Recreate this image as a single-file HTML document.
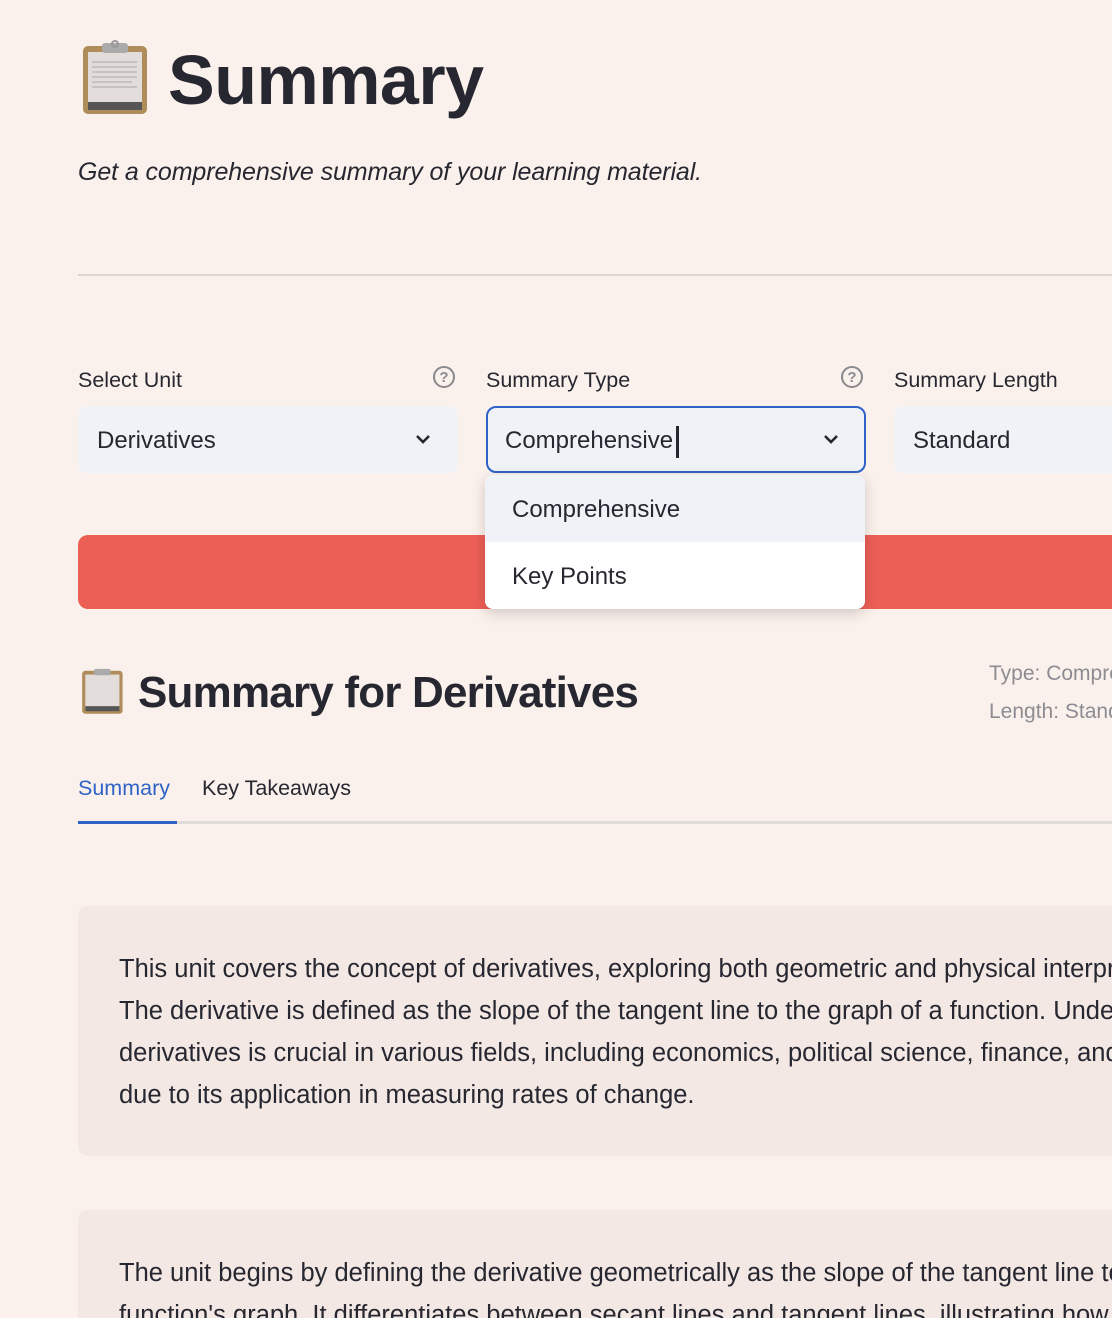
<!DOCTYPE html>
<html><head><meta charset="utf-8"><style>
html,body{margin:0;padding:0;width:1112px;height:1318px;overflow:hidden}
body{background:#fbf1ec;font-family:"Liberation Sans",sans-serif;color:#262730;position:relative}
.a{position:absolute;white-space:nowrap}
.sel{position:absolute;top:406px;height:67px;background:#eff2f6;border-radius:10px;box-sizing:border-box;font-size:24px;line-height:69px;padding-left:19px}
.chev{position:absolute;top:26px}
.help{position:absolute;top:366px;width:22px;height:22px;border:2px solid #8a8a8f;border-radius:50%;box-sizing:border-box;color:#8a8a8f;font-size:15px;line-height:19px;text-align:center;font-weight:bold}
.lbl{position:absolute;top:368px;font-size:21.5px}
.card{position:absolute;left:78px;width:1100px;background:#f3e8e4;border-radius:10px;overflow:hidden}
.p{font-size:25.5px;line-height:42px;letter-spacing:0px}
</style></head><body>
<svg class="a" style="left:82px;top:40px" width="68" height="76" viewBox="0 0 68 76">
<rect x="1" y="6" width="64" height="68" rx="5" fill="#b08c5a"/>
<rect x="6" y="12" width="54" height="56" fill="#e2dcda"/>
<rect x="6" y="62" width="54" height="8" fill="#555"/>
<rect x="20" y="3" width="26" height="10" rx="3" fill="#aaa"/>
<circle cx="33" cy="4" r="3" fill="none" stroke="#999" stroke-width="2"/>
<g stroke="#aaa" stroke-width="1"><line x1="10" y1="22" x2="55" y2="22"/><line x1="10" y1="27" x2="55" y2="27"/><line x1="10" y1="32" x2="55" y2="32"/><line x1="10" y1="37" x2="55" y2="37"/><line x1="10" y1="42" x2="50" y2="42"/><line x1="10" y1="47" x2="55" y2="47"/></g>
</svg>
<div class="a" style="left:168px;top:40px;font-size:70px;font-weight:bold;letter-spacing:-0.5px">Summary</div>
<div class="a" style="left:78px;top:158px;font-size:25px;font-style:italic;letter-spacing:-0.1px">Get a comprehensive summary of your learning material.</div>
<div class="a" style="left:78px;top:274px;width:1034px;height:2px;background:#dcd6d3"></div>

<div class="lbl" style="left:78px">Select Unit</div>
<div class="help" style="left:433px">?</div>
<div class="lbl" style="left:486px">Summary Type</div>
<div class="help" style="left:841px">?</div>
<div class="lbl" style="left:894px">Summary Length</div>

<div class="sel" style="left:78px;width:380px">Derivatives<svg class="chev" style="left:336px" width="18" height="14" viewBox="0 0 18 14"><path d="M3 4l6 6 6-6" fill="none" stroke="#262730" stroke-width="2.6"/></svg></div>
<div class="sel" style="left:486px;width:380px;border:2px solid #2f62c6;padding-left:17px;line-height:65px">Comprehensive<span style="display:inline-block;width:3px;height:32px;background:#262730;vertical-align:middle;margin-left:3px"></span><svg class="chev" style="left:334px;top:24px" width="18" height="14" viewBox="0 0 18 14"><path d="M3 4l6 6 6-6" fill="none" stroke="#262730" stroke-width="2.6"/></svg></div>
<div class="sel" style="left:894px;width:260px">Standard</div>

<div class="a" style="left:78px;top:535px;width:1050px;height:74px;background:#ec5f57;border-radius:10px"></div>
<div class="a" style="left:485px;top:475px;width:380px;height:134px;background:#fff;border-radius:8px;box-shadow:0 4px 14px rgba(0,0,0,0.18);overflow:hidden">
<div style="height:67px;background:#eff2f6;font-size:24px;line-height:69px;padding-left:27px">Comprehensive</div>
<div style="height:67px;font-size:24px;line-height:69px;padding-left:27px">Key Points</div>
</div>

<svg class="a" style="left:81px;top:667px" width="44" height="48" viewBox="0 0 68 76">
<rect x="1" y="6" width="64" height="68" rx="5" fill="#b08c5a"/>
<rect x="6" y="12" width="54" height="56" fill="#e2dcda"/>
<rect x="6" y="62" width="54" height="8" fill="#555"/>
<rect x="20" y="3" width="26" height="10" rx="3" fill="#aaa"/>
</svg>
<div class="a" style="left:138px;top:668px;font-size:44px;font-weight:bold;letter-spacing:-0.8px">Summary for Derivatives</div>
<div class="a" style="left:989px;top:655px;font-size:21px;color:#8c8c92;line-height:38px">Type: Comprehensive<br>Length: Standard</div>

<div class="a" style="left:78px;top:776px;font-size:21.5px;color:#2f62c6">Summary</div>
<div class="a" style="left:202px;top:776px;font-size:21.5px">Key Takeaways</div>
<div class="a" style="left:78px;top:821px;width:1034px;height:3px;background:#e3ddda"></div>
<div class="a" style="left:78px;top:821px;width:99px;height:3px;background:#2f62c6"></div>

<div class="card" style="top:906px;height:250px"><div class="a p" style="left:41px;top:42px">This unit covers the concept of derivatives, exploring both geometric and physical interpretations.<br>The derivative is defined as the slope of the tangent line to the graph of a function. Understanding<br>derivatives is crucial in various fields, including economics, political science, finance, and more,<br>due to its application in measuring rates of change.</div></div>
<div class="card" style="top:1210px;height:108px;border-radius:10px 10px 0 0"><div class="a p" style="left:41px;top:42px">The unit begins by defining the derivative geometrically as the slope of the tangent line to the<br>function's graph. It differentiates between secant lines and tangent lines, illustrating how</div></div>
</body></html>
